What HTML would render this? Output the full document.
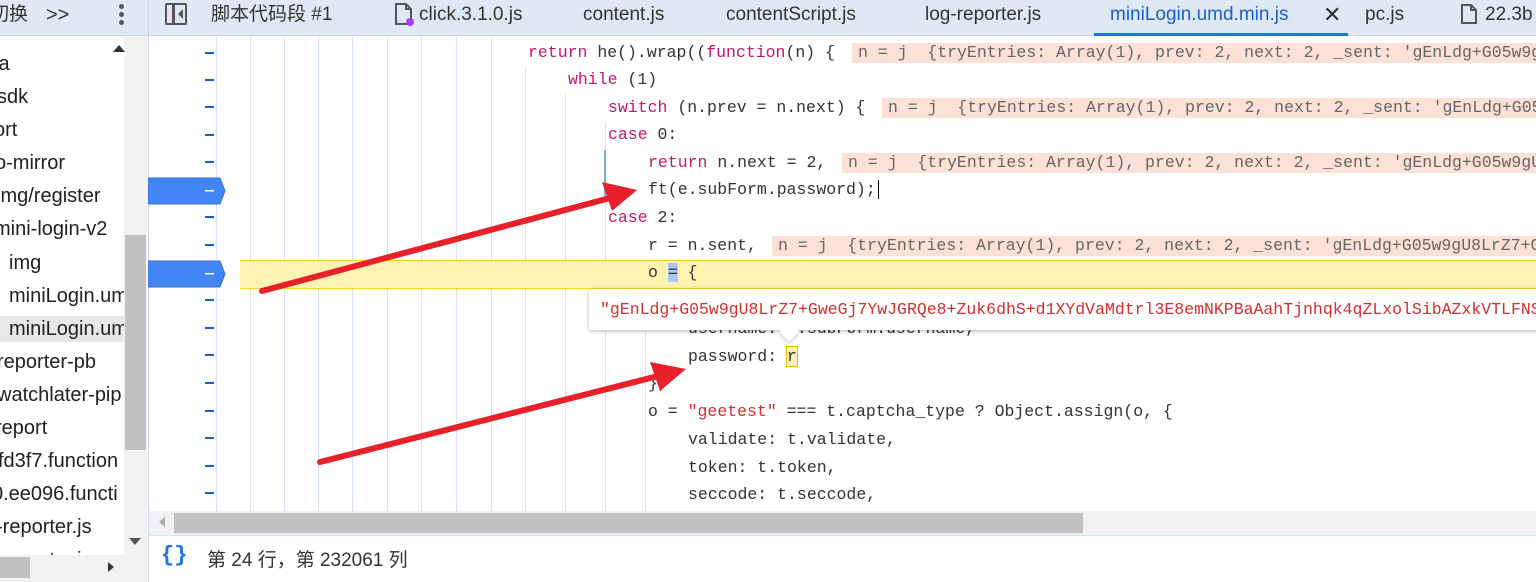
<!DOCTYPE html>
<html><head><meta charset="utf-8"><style>
*{margin:0;padding:0;box-sizing:border-box}
html,body{width:1536px;height:582px;overflow:hidden}
body{background:#fff;font-family:"Liberation Sans","Noto Sans CJK SC",sans-serif;position:relative}
#root{position:absolute;left:0;top:0;width:1536px;height:582px;overflow:hidden}
.a{position:absolute;white-space:nowrap}
.tab{position:absolute;top:0;height:36px;line-height:30px;font-size:19px;color:#333}
.side{font-size:20px;color:#202124;line-height:24px}
.code{font-family:"Liberation Mono","Noto Sans CJK SC",monospace;font-size:16.5px;color:#333;line-height:20px}
.k{color:#c7156f}.s{color:#d32f2f}
.val{background:#fde1d6;color:#666;padding-left:6px}
.dash{position:absolute;left:205px;width:9px;height:1.5px;background:#1a5fd1}
.g{position:absolute;top:37px;width:1px;height:475px;background:#d6e3f7}
</style></head><body><div id="root">
<!-- tab bar -->
<div class="a" style="left:0;top:0;width:1536px;height:36px;background:#dfe8f5;border-bottom:1px solid #c9d6ea"></div>
<div class="a" style="left:148px;top:0;width:1px;height:582px;background:#cdd9ea"></div>
<div class="tab" style="left:-10px">切换</div>
<div class="tab" style="left:46px;font-size:20px">&gt;&gt;</div>
<div class="a" style="left:119px;top:4px;width:5px;height:5px;border-radius:50%;background:#555;box-shadow:0 8px 0 #555,0 16px 0 #555"></div>
<div class="a" style="left:165px;top:3px;width:22px;height:22px;border:2.5px solid #555;border-radius:2px"></div>
<div class="a" style="left:172px;top:3px;width:2.5px;height:22px;background:#555"></div>
<div class="a" style="left:178px;top:9px;width:0;height:0;border:5px solid transparent;border-right:5px solid #555;border-left:0"></div>
<div class="tab" style="left:211px">脚本代码段 #1</div>
<svg class="a" style="left:394px;top:2px" width="20" height="24"><path d="M2 2h10l5 5v15H2z M12 2v5h5" fill="none" stroke="#555" stroke-width="2"/><circle cx="16" cy="20" r="4" fill="#a142f4"/></svg>
<div class="tab" style="left:419px">click.3.1.0.js</div>
<div class="tab" style="left:583px">content.js</div>
<div class="tab" style="left:726px">contentScript.js</div>
<div class="tab" style="left:925px">log-reporter.js</div>
<div class="tab" style="left:1110px;color:#1a5fd1">miniLogin.umd.min.js</div>
<div class="tab" style="left:1323px;font-size:22px">✕</div>
<div class="a" style="left:1094px;top:33px;width:254px;height:3px;background:#1a73e8"></div>
<div class="tab" style="left:1365px">pc.js</div>
<svg class="a" style="left:1460px;top:3px" width="18" height="22"><path d="M2 2h9l5 5v13H2z M11 2v5h5" fill="none" stroke="#555" stroke-width="2"/></svg>
<div class="tab" style="left:1485px">22.3b</div>
<!-- sidebar -->
<div class="a" style="left:124px;top:37px;width:23px;height:545px;background:#f1f1f1"></div>
<div class="a" style="left:125px;top:235px;width:21px;height:215px;background:#c1c1c1"></div>
<div class="a" style="left:113px;top:45px;border:6px solid transparent;border-bottom:7px solid #333;border-top:0"></div>
<div class="a" style="left:129px;top:538px;border:6px solid transparent;border-top:7px solid #555;border-bottom:0"></div>
<div class="a" style="left:0;top:37px;width:124px;height:518px;overflow:hidden">
<div class="a" style="left:0;top:279px;width:124px;height:26px;background:#e8e8e8"></div>
<div class="a side" style="left:-6px;top:15px">ia</div>
<div class="a side" style="left:-3px;top:48px">sdk</div>
<div class="a side" style="left:-6px;top:81px">ort</div>
<div class="a side" style="left:-5px;top:114px">o-mirror</div>
<div class="a side" style="left:-4px;top:147px">img/register</div>
<div class="a side" style="left:-6px;top:180px">mini-login-v2</div>
<div class="a side" style="left:9px;top:214px">img</div>
<div class="a side" style="left:9px;top:247px">miniLogin.umd</div>
<div class="a side" style="left:9px;top:280px">miniLogin.umd</div>
<div class="a side" style="left:-3px;top:313px">reporter-pb</div>
<div class="a side" style="left:-3px;top:346px">watchlater-pip</div>
<div class="a side" style="left:-5px;top:379px">report</div>
<div class="a side" style="left:-2px;top:412px">fd3f7.function</div>
<div class="a side" style="left:-8px;top:445px">0.ee096.functi</div>
<div class="a side" style="left:-4px;top:478px">-reporter.js</div>
<div class="a side" style="left:-4px;top:511px">-reporter.js</div>
</div>
<div class="a" style="left:0;top:555px;width:124px;height:27px;background:#f1f1f1"></div>
<div class="a" style="left:0;top:557px;width:30px;height:21px;background:#c1c1c1"></div>
<div class="a" style="left:108px;top:562px;border:5px solid transparent;border-left:6px solid #333;border-right:0"></div>
<!-- guides -->
<div class="g" style="left:216px"></div><div class="g" style="left:250px"></div><div class="g" style="left:284px"></div><div class="g" style="left:318px"></div><div class="g" style="left:352px"></div><div class="g" style="left:387px"></div><div class="g" style="left:421px"></div><div class="g" style="left:456px"></div><div class="g" style="left:491px"></div>
<div class="g" style="left:525px;top:67px;height:445px"></div><div class="g" style="left:565px;top:94px;height:418px"></div><div class="g" style="left:605px;top:122px;height:390px"></div><div class="g" style="left:645px;top:287px;height:225px"></div>
<div class="a" style="left:604px;top:150px;width:2px;height:50px;background:#7aa7ec"></div>
<!-- highlight line -->
<div class="a" style="left:240px;top:260px;width:1296px;height:29px;background:#fef3b0;border-top:1px solid #f7cf3a;border-bottom:1px solid #f7cf3a"></div>
<!-- gutter dashes -->
<div class="dash" style="top:52px"></div><div class="dash" style="top:79px"></div><div class="dash" style="top:106px"></div><div class="dash" style="top:134px"></div><div class="dash" style="top:161px"></div><div class="dash" style="top:216px"></div><div class="dash" style="top:244px"></div><div class="dash" style="top:299px"></div><div class="dash" style="top:327px"></div><div class="dash" style="top:354px"></div><div class="dash" style="top:382px"></div><div class="dash" style="top:410px"></div><div class="dash" style="top:437px"></div><div class="dash" style="top:465px"></div><div class="dash" style="top:492px"></div>
<svg class="a" style="left:148px;top:177px" width="80" height="28"><path d="M0 1H72L77 14L72 27H0z" fill="#4285f4" stroke="#3a6fd0"/><rect x="57" y="13" width="9" height="1.5" fill="#fff"/></svg>
<svg class="a" style="left:148px;top:260px" width="80" height="28"><path d="M0 1H72L77 14L72 27H0z" fill="#4285f4" stroke="#3a6fd0"/><rect x="57" y="13" width="9" height="1.5" fill="#fff"/></svg>
<!-- code -->
<div class="a" style="left:149px;top:37px;width:1387px;height:474px;overflow:hidden">
<div class="a code" style="left:379px;top:6px"><span class="k">return</span> he().wrap((<span class="k">function</span>(n) { <span class="val" style="position:absolute;left:324px;width:700px">n = j&nbsp; {tryEntries: Array(1), prev: 2, next: 2, _sent: 'gEnLdg+G05w9gU8LrZ7</span></div>
<div class="a code" style="left:419px;top:33px"><span class="k">while</span> (1)</div>
<div class="a code" style="left:459px;top:61px"><span class="k">switch</span> (n.prev = n.next) { <span class="val" style="position:absolute;left:274px;width:700px">n = j&nbsp; {tryEntries: Array(1), prev: 2, next: 2, _sent: 'gEnLdg+G05w9gU8LrZ7</span></div>
<div class="a code" style="left:459px;top:88px"><span class="k">case</span> 0:</div>
<div class="a code" style="left:499px;top:116px"><span class="k">return</span> n.next = 2, <span class="val" style="position:absolute;left:194px;width:700px">n = j&nbsp; {tryEntries: Array(1), prev: 2, next: 2, _sent: 'gEnLdg+G05w9gU8LrZ7</span></div>
<div class="a code" style="left:499px;top:143px">ft(e.subForm.password);<span style="border-left:1px solid #000;margin-left:2px"></span></div>
<div class="a code" style="left:459px;top:171px"><span class="k">case</span> 2:</div>
<div class="a code" style="left:499px;top:199px">r = n.sent, <span class="val" style="position:absolute;left:124px;width:800px">n = j&nbsp; {tryEntries: Array(1), prev: 2, next: 2, _sent: 'gEnLdg+G05w9gU8LrZ7+G</span></div>
<div class="a code" style="left:499px;top:226px">o <span style="background:#a8c7fa">=</span> {</div>
<div class="a code" style="left:539px;top:282px">username: e.subForm.username,</div>
<div class="a code" style="left:539px;top:310px">password: <span style="background:#fef3b0;outline:1px solid #f7b500">r</span></div>
<div class="a code" style="left:499px;top:337px">},</div>
<div class="a code" style="left:499px;top:365px">o = <span class="s">"geetest"</span> === t.captcha_type ? Object.assign(o, {</div>
<div class="a code" style="left:539px;top:393px">validate: t.validate,</div>
<div class="a code" style="left:539px;top:421px">token: t.token,</div>
<div class="a code" style="left:539px;top:448px">seccode: t.seccode,</div>
<!-- tooltip -->
<div class="a" style="left:440px;top:252px;width:960px;height:41px;background:#fff;box-shadow:0 1px 4px rgba(0,0,0,.3);border-radius:3px"></div>
<div class="a" style="left:633px;top:288px;width:14px;height:14px;background:#fff;transform:rotate(45deg);box-shadow:2px 2px 3px rgba(0,0,0,.15)"></div>
<div class="a code" style="left:451px;top:263px;color:#d32f2f">"gEnLdg+G05w9gU8LrZ7+GweGj7YwJGRQe8+Zuk6dhS+d1XYdVaMdtrl3E8emNKPBaAahTjnhqk4qZLxolSibAZxkVTLFNS</div>
</div>
<!-- h scrollbar -->
<div class="a" style="left:149px;top:511px;width:1387px;height:25px;background:#f1f1f1;border-bottom:1px solid #d6e3f7"></div>
<div class="a" style="left:159px;top:517px;border:5px solid transparent;border-right:6px solid #aaa;border-left:0"></div>
<div class="a" style="left:174px;top:513px;width:909px;height:20px;background:#c1c1c1"></div>
<!-- status -->
<div class="a" style="left:161px;top:543px;font-family:'Liberation Mono',monospace;font-size:22px;font-weight:bold;color:#1a73e8">{}</div>
<div class="a" style="left:207px;top:545px;font-size:19px;color:#333">第 24 行，第 232061 列</div>
<!-- arrows -->
<svg class="a" style="left:0;top:0" width="1536" height="582">
<g stroke="#e8202a" stroke-width="6" stroke-linecap="round"><line x1="262" y1="291" x2="610" y2="198"/><line x1="320" y1="462" x2="658" y2="376"/></g>
<path d="M637 190L602 182L612 211z" fill="#e8202a"/>
<path d="M686 369L650 362L660 391z" fill="#e8202a"/>
</svg>
</div></body></html>
